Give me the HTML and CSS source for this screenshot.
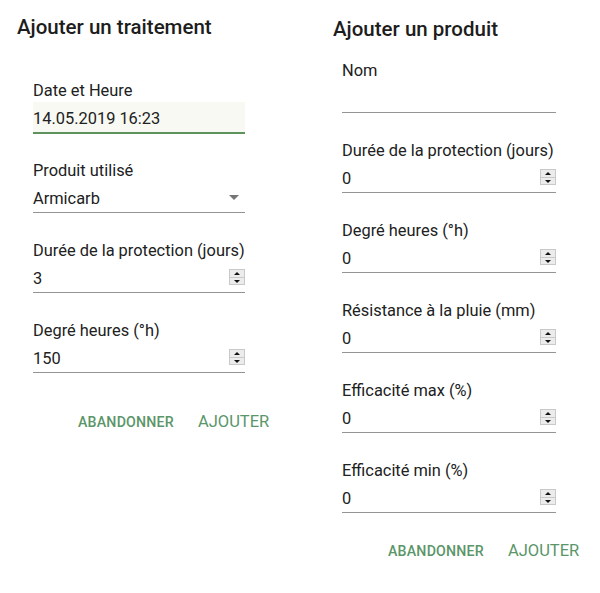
FILE: index.html
```html
<!DOCTYPE html>
<html lang="fr">
<head>
<meta charset="utf-8">
<title>Ajouter</title>
<link rel="stylesheet" href="styles.css">
</head>
<body>
<div class="page">
  <section class="panel panel-left">
    <h2 class="title">Ajouter un traitement</h2>
    <div class="fields">
      <div class="field">
        <div class="label">Date et Heure</div>
        <div class="input focused"><span class="value">14.05.2019 16:23</span></div>
      </div>
      <div class="field">
        <div class="label">Produit utilisé</div>
        <div class="input"><span class="value">Armicarb</span><span class="caret"></span></div>
      </div>
      <div class="field">
        <div class="label">Durée de la protection (jours)</div>
        <div class="input"><span class="value">3</span><span class="spin"><i class="up"></i><i class="down"></i></span></div>
      </div>
      <div class="field">
        <div class="label">Degré heures (°h)</div>
        <div class="input"><span class="value">150</span><span class="spin"><i class="up"></i><i class="down"></i></span></div>
      </div>
    </div>
    <div class="actions">
      <button class="btn btn-cancel">Abandonner</button>
      <button class="btn btn-add">Ajouter</button>
    </div>
  </section>
  <section class="panel panel-right">
    <h2 class="title">Ajouter un produit</h2>
    <div class="fields">
      <div class="field">
        <div class="label">Nom</div>
        <div class="input"><span class="value"></span></div>
      </div>
      <div class="field">
        <div class="label">Durée de la protection (jours)</div>
        <div class="input"><span class="value">0</span><span class="spin"><i class="up"></i><i class="down"></i></span></div>
      </div>
      <div class="field">
        <div class="label">Degré heures (°h)</div>
        <div class="input"><span class="value">0</span><span class="spin"><i class="up"></i><i class="down"></i></span></div>
      </div>
      <div class="field">
        <div class="label">Résistance à la pluie (mm)</div>
        <div class="input"><span class="value">0</span><span class="spin"><i class="up"></i><i class="down"></i></span></div>
      </div>
      <div class="field">
        <div class="label">Efficacité max (%)</div>
        <div class="input"><span class="value">0</span><span class="spin"><i class="up"></i><i class="down"></i></span></div>
      </div>
      <div class="field">
        <div class="label">Efficacité min (%)</div>
        <div class="input"><span class="value">0</span><span class="spin"><i class="up"></i><i class="down"></i></span></div>
      </div>
    </div>
    <div class="actions">
      <button class="btn btn-cancel">Abandonner</button>
      <button class="btn btn-add">Ajouter</button>
    </div>
  </section>
</div>
</body>
</html>
```

FILE: styles.css
```css
* { box-sizing: border-box; }
html, body { margin: 0; padding: 0; background: #fff; }
body {
  font-family: Roboto, "Liberation Sans", sans-serif;
  color: #212121;
  width: 600px;
  height: 593px;
  overflow: hidden;
}
.page {
  display: flex;
  align-items: flex-start;
}
.panel { display: flex; flex-direction: column; }
.panel-left { width: 316px; padding: 15px 0 0 17px; }
.panel-right { width: 284px; padding: 17px 0 0 17px; }
.title {
  margin: 0;
  font-size: 20.5px;
  line-height: 24px;
  font-weight: 500;
  color: #1d1d1d;
}
.panel-left .fields { margin-top: 41px; padding-left: 16px; width: 228px; }
.panel-right .fields { margin-top: 19px; padding-left: 9px; width: 223px; }
.field { margin-bottom: 27px; }
.label {
  font-size: 16.4px;
  line-height: 20px;
  height: 21px;
  padding-top: 1px;
  color: #212121;
  white-space: nowrap;
}
.input {
  margin-top: 1px;
  height: 31px;
  border-bottom: 1px solid #949494;
  display: flex;
  align-items: center;
  justify-content: space-between;
  font-size: 16.4px;
}
.input.focused {
  height: 32px;
  margin-bottom: -1px;
  border-bottom: 2px solid #5e935e;
  background: #f8f9f3;
}
.value { line-height: 20px; padding-top: 3px; }
.caret {
  width: 0; height: 0;
  border-left: 5px solid transparent;
  border-right: 5px solid transparent;
  border-top: 5px solid #757575;
  margin-right: 6px;
}
.spin {
  width: 16px;
  height: 16px;
  display: flex;
  flex-direction: column;
  border: 1px solid #c9c9c9;
  background: #ececec;
}
.spin i {
  flex: 1;
  position: relative;
  display: block;
}
.spin i.up { border-bottom: 1px solid #c9c9c9; }
.spin i::after {
  content: "";
  position: absolute;
  left: 4px;
  top: 2px;
  width: 0; height: 0;
  border-left: 3px solid transparent;
  border-right: 3px solid transparent;
}
.spin i.up::after { border-bottom: 3px solid #111; }
.spin i.down::after { border-top: 3px solid #111; top: 2px; }
.actions {
  display: flex;
  align-items: center;
  gap: 24px;
}
.panel-left .actions { margin-top: 12px; padding-left: 61px; }
.panel-right .actions { margin-top: 1px; padding-left: 55px; }
.btn {
  border: 0;
  background: none;
  padding: 0;
  font-family: Roboto, "Liberation Sans", sans-serif;
  color: #5a9669;
  text-transform: uppercase;
  cursor: pointer;
  line-height: 20px;
}
.btn-cancel { font-size: 14.2px; font-weight: 500; letter-spacing: 0.2px; }
.btn-add { font-size: 16.5px; font-weight: 400; }
```
